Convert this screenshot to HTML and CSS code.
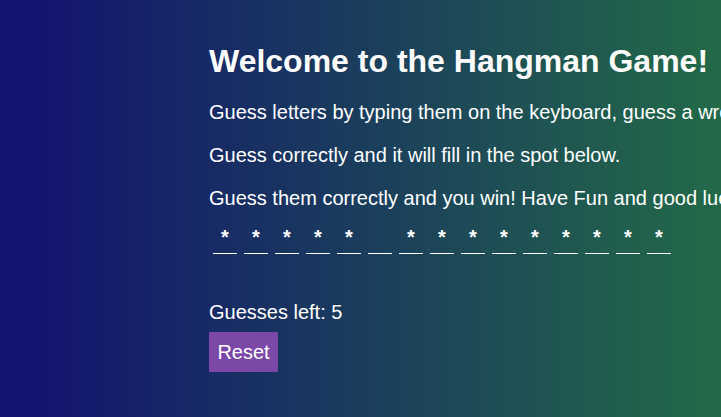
FILE: index.html
```html
<!DOCTYPE html>
<html>
<head>
<meta charset="utf-8">
<link rel="stylesheet" href="styles.css">
</head>
<body>
<main class="game">
  <h1 class="title">Welcome to the Hangman Game!</h1>
  <p class="text">Guess letters by typing them on the keyboard, guess a wrong letter and you lose a guess.</p>
  <p class="text">Guess correctly and it will fill in the spot below.</p>
  <p class="text">Guess them correctly and you win! Have Fun and good luck!</p>
  <div class="word">
    <span class="slot">*</span><span class="slot">*</span><span class="slot">*</span><span class="slot">*</span><span class="slot">*</span><span class="slot"></span><span class="slot">*</span><span class="slot">*</span><span class="slot">*</span><span class="slot">*</span><span class="slot">*</span><span class="slot">*</span><span class="slot">*</span><span class="slot">*</span><span class="slot">*</span>
  </div>
  <p class="guesses">Guesses left: 5</p>
  <button class="reset">Reset</button>
</main>
</body>
</html>
```
FILE: styles.css
```css
html, body {
  margin: 0;
  height: 100%;
}
body {
  background: linear-gradient(to right, #121270 0%, #13146f 5%, #236a48 100%);
  color: #fff;
  font-family: "Liberation Sans", Arial, sans-serif;
  overflow: hidden;
}
.game {
  padding: 22px 0 0 209px;
  white-space: nowrap;
}
.title {
  font-size: 32px;
  font-weight: bold;
  margin: 21px 0 21px;
}
.text {
  font-size: 20px;
  margin: 0 0 20px;
  line-height: 23px;
}
.word {
  display: flex;
  gap: 7px;
  padding-left: 4px;
  margin-top: -5px;
  height: 30px;
}
.slot {
  width: 24px;
  height: 28px;
  border-bottom: 1px solid #fff;
  font-size: 20px;
  font-weight: bold;
  text-align: center;
  line-height: 24px;
}
.guesses {
  font-size: 20px;
  line-height: 23px;
  margin: 46px 0 8px;
}
.reset {
  font-family: "Liberation Sans", Arial, sans-serif;
  font-size: 20px;
  color: #fff;
  background: #7b48a8;
  border: none;
  padding: 8px 8px;
  height: 40px;
  width: 69px;
}
```
